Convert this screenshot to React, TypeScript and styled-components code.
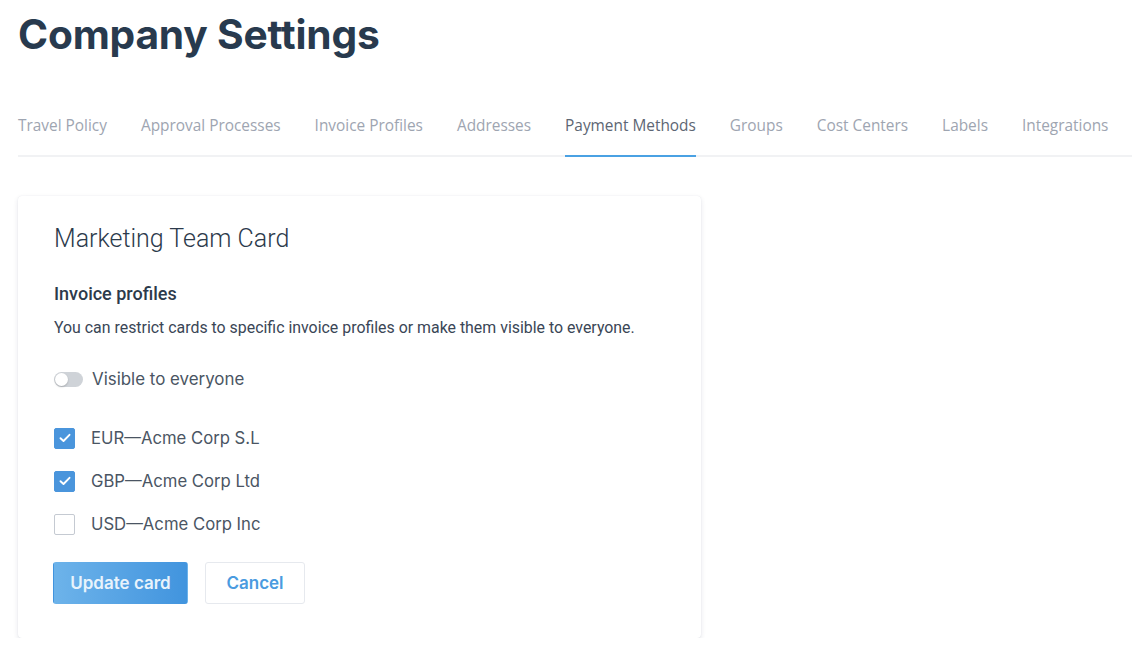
import React, { useState } from "react";
import styled, { createGlobalStyle } from "styled-components";

const GlobalStyle = createGlobalStyle`
    body {
        margin: 0;
        background: #ffffff;
        font-family: Inter, "Liberation Sans", sans-serif;
        color: #2c3a4b;
    }
`;

const Page = styled.div`
    padding: 0 0 0 18px;
`;

const Title = styled.h1`
    margin: 0;
    padding-top: 11px;
    font-size: 40.7px;
    font-weight: 700;
    letter-spacing: -0.2px;
    color: #283a4e;
    line-height: 48px;
`;

const Tabs = styled.nav`
    display: flex;
    gap: 34px;
    margin-top: 50px;
    border-bottom: 2px solid #f1f2f4;
`;

const Tab = styled.a<{ $active?: boolean }>`
    font-family: "Open Sans", sans-serif;
    font-size: 15.4px;
    line-height: 22px;
    color: ${props => (props.$active ? "#5d6673" : "#9ea5b1")};
    padding: 6px 0 18px;
    margin-bottom: -2px;
    border-bottom: 2px solid ${props => (props.$active ? "#4aa1e3" : "transparent")};
    cursor: pointer;
    white-space: nowrap;
`;

const Card = styled.section`
    width: 683px;
    margin-top: 39px;
    background: #fff;
    border-radius: 4px;
    box-shadow: 0 2px 5px rgba(40, 50, 90, 0.12), 0 0 1px rgba(40, 50, 90, 0.12);
    padding: 27px 36px 34px;
    box-sizing: border-box;
`;

const CardTitle = styled.h2`
    margin: 0;
    font-family: Roboto, sans-serif;
    font-size: 25px;
    font-weight: 300;
    color: #2c3a4b;
    line-height: 32px;
`;

const SectionTitle = styled.h3`
    margin: 27px 0 0;
    font-family: Roboto, sans-serif;
    font-size: 18px;
    font-weight: 500;
    color: #2c3a4b;
    line-height: 24px;
`;

const Description = styled.p`
    margin: 11px 0 0;
    font-family: Roboto, sans-serif;
    font-size: 15.9px;
    color: #3a4656;
    line-height: 22px;
`;

const ToggleRow = styled.label`
    display: flex;
    align-items: center;
    gap: 9px;
    margin-top: 29px;
    font-size: 16.9px;
    line-height: 22px;
    color: #4a5563;
    cursor: pointer;
`;

const Switch = styled.span<{ $on: boolean }>`
    position: relative;
    width: 29px;
    height: 15px;
    border-radius: 8px;
    background: ${props => (props.$on ? "#4aa1e3" : "#cfd3d8")};
    flex-shrink: 0;

    &::after {
        content: "";
        position: absolute;
        top: 1px;
        left: ${props => (props.$on ? "15px" : "1px")};
        width: 13px;
        height: 13px;
        border-radius: 50%;
        background: #fff;
        box-shadow: 0 1px 2px rgba(0, 0, 0, 0.2);
    }
`;

const List = styled.div`
    display: flex;
    flex-direction: column;
    gap: 21px;
    margin-top: 37px;
`;

const CheckRow = styled.label`
    display: flex;
    align-items: center;
    gap: 16px;
    font-size: 16.7px;
    color: #4a5563;
    cursor: pointer;
    line-height: 22px;
`;

const Box = styled.span<{ $checked: boolean }>`
    width: 21px;
    height: 21px;
    box-sizing: border-box;
    border-radius: 2px;
    border: 1px solid ${props => (props.$checked ? "#4a95dc" : "#c5cad2")};
    background: ${props => (props.$checked ? "#4a95dc" : "#fff")};
    display: flex;
    align-items: center;
    justify-content: center;
    flex-shrink: 0;
`;

const Actions = styled.div`
    display: flex;
    gap: 17px;
    margin-top: 27px;
    margin-left: -1px;
`;

const Button = styled.button<{ $primary?: boolean }>`
    height: 42px;
    padding: 0 16px;
    border-radius: 3px;
    font-family: Inter, sans-serif;
    font-size: 17px;
    font-weight: 600;
    cursor: pointer;
    border: 1px solid ${props => (props.$primary ? "transparent" : "#e6e9ee")};
    background: ${props =>
        props.$primary ? "linear-gradient(90deg, #6db3ea 0%, #4194de 100%)" : "#fff"};
    color: ${props => (props.$primary ? "#e8f3fc" : "#4a9be0")};
    min-width: ${props => (props.$primary ? "135px" : "100px")};
`;

const tabs = [
    "Travel Policy",
    "Approval Processes",
    "Invoice Profiles",
    "Addresses",
    "Payment Methods",
    "Groups",
    "Cost Centers",
    "Labels",
    "Integrations",
];

const Check = () => (
    <svg width="12" height="10" viewBox="0 0 12 10" fill="none">
        <path d="M1.5 5.2L4.5 8L10.5 1.8" stroke="#fff" strokeWidth="1.9" strokeLinecap="round" strokeLinejoin="round" />
    </svg>
);

const App: React.FC = () => {
    const [visible, setVisible] = useState(false);
    const [profiles, setProfiles] = useState([
        { name: "EUR—Acme Corp S.L", checked: true },
        { name: "GBP—Acme Corp Ltd", checked: true },
        { name: "USD—Acme Corp Inc", checked: false },
    ]);

    const toggle = (i: number) =>
        setProfiles(p => p.map((x, j) => (j === i ? { ...x, checked: !x.checked } : x)));

    return (
        <>
            <GlobalStyle />
            <Page>
                <Title>Company Settings</Title>
                <Tabs>
                    {tabs.map(t => (
                        <Tab key={t} $active={t === "Payment Methods"}>
                            {t}
                        </Tab>
                    ))}
                </Tabs>
                <Card>
                    <CardTitle>Marketing Team Card</CardTitle>
                    <SectionTitle>Invoice profiles</SectionTitle>
                    <Description>
                        You can restrict cards to specific invoice profiles or make them visible to everyone.
                    </Description>
                    <ToggleRow onClick={() => setVisible(v => !v)}>
                        <Switch $on={visible} />
                        Visible to everyone
                    </ToggleRow>
                    <List>
                        {profiles.map((p, i) => (
                            <CheckRow key={p.name} onClick={() => toggle(i)}>
                                <Box $checked={p.checked}>{p.checked && <Check />}</Box>
                                {p.name}
                            </CheckRow>
                        ))}
                    </List>
                    <Actions>
                        <Button $primary>Update card</Button>
                        <Button>Cancel</Button>
                    </Actions>
                </Card>
            </Page>
        </>
    );
};

export default App;
